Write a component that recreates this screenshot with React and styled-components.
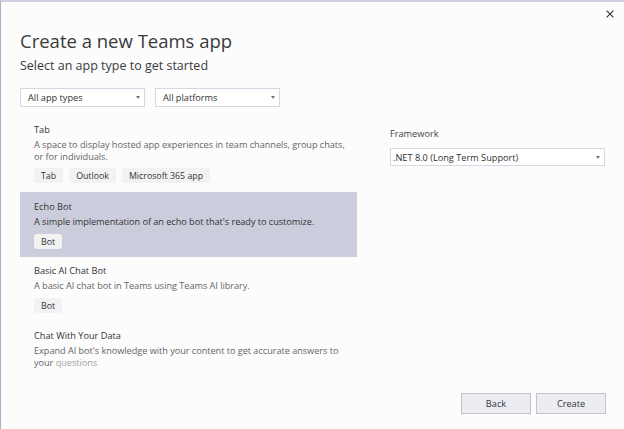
import React from "react";
import styled, { createGlobalStyle } from "styled-components";

const Global = createGlobalStyle`
  html, body { margin: 0; padding: 0; background: #fcfcfd; }
  * { box-sizing: border-box; }
`;

const Dialog = styled.div`
  width: 624px; height: 429px; overflow: hidden; background: #fcfcfd;
  border-top: 2px solid #cfcfe0; border-left: 1px solid #a9aecf;
  font-family: "Open Sans", "Noto Sans", sans-serif; color: #333;
  display: flex; flex-direction: column;
`;
const CloseRow = styled.div`
  height: 17px; padding: 8px 10px 0 0; display: flex; justify-content: flex-end;
`;
const CloseBtn = styled.svg`width: 8px; height: 8px; display: block;`;
const Body = styled.div`
  flex: 1; min-height: 0; display: grid; grid-template-columns: 337px 1fr; column-gap: 33px;
  padding: 0 18px 0 19px;
`;
const Left = styled.div`display: flex; flex-direction: column; min-height: 0;`;
const Title = styled.h1`
  margin: 10px 0 0; font-size: 18.5px; line-height: 24px; font-weight: 400; color: #3a3a3a;
`;
const Subtitle = styled.h2`
  margin: 4px 0 0; font-size: 12.5px; line-height: 18px; font-weight: 400; color: #3a3a3a;
`;
const Filters = styled.div`display: flex; gap: 10px; margin-top: 13px;`;
const Select = styled.div`
  width: ${p => p.$w}px; height: ${p => p.$h}px; background: #fff; border: 1px solid #d6d6e4;
  display: flex; align-items: center; justify-content: space-between;
  padding: 0 ${p => p.$pr}px 0 ${p => p.$pl}px;
  font-size: 9.2px; color: #333;
`;
const Caret = styled.span`
  width: 0; height: 0; border-left: 2.5px solid transparent; border-right: 2.5px solid transparent;
  border-top: 3px solid #777;
`;
const List = styled.div`margin-top: 14px; display: flex; flex-direction: column;`;
const Item = styled.div`
  height: ${p => p.$h}px; padding: ${p => p.$pt}px 10px 0 14px;
  background: ${p => (p.$active ? "#cbcddc" : "transparent")};
`;
const ItemName = styled.div`font-size: 9.2px; line-height: 14px; color: #333;`;
const ItemDesc = styled.div`
  margin-top: 2px; font-size: 9.2px; line-height: 12px; letter-spacing: -0.05px;
  color: ${p => (p.$active ? "#333" : "#666")};
`;
const Fade = styled.span`color: #a0a0a0;`;
const Tags = styled.div`display: flex; gap: 6px; margin-top: ${p => p.$mt}px;`;
const Tag = styled.span`
  height: 15px; padding: 0 7px; border-radius: 3px; background: #f2f2f3;
  display: inline-flex; align-items: center; font-size: 8.8px; color: #333;
`;
const Right = styled.div`padding-top: 108px;`;
const Label = styled.div`font-size: 9.2px; line-height: 14px; color: #444; margin-bottom: 7px;`;
const Footer = styled.div`
  height: 36px; flex-shrink: 0; display: flex; justify-content: flex-end; gap: 5px; padding: 0 18px 15px 0;
`;
const Button = styled.button`
  width: 70px; height: 21px; background: #ecedf2; border: 1px solid #c4c4c8; border-radius: 0;
  font-family: inherit; font-size: 9.2px; color: #333; padding: 0;
`;

export default function App() {
  return (
    <>
      <Global />
      <Dialog>
        <CloseRow>
          <CloseBtn viewBox="0 0 8 8"><path d="M.6.6l6.8 6.8M7.4.6L.6 7.4" stroke="#333" strokeWidth="1.1" fill="none" /></CloseBtn>
        </CloseRow>
        <Body>
          <Left>
            <Title>Create a new Teams app</Title>
            <Subtitle>Select an app type to get started</Subtitle>
            <Filters>
              <Select $w={125} $h={19} $pl={7} $pr={4}>All app types<Caret /></Select>
              <Select $w={125} $h={19} $pl={7} $pr={4}>All platforms<Caret /></Select>
            </Filters>
            <List>
              <Item $h={71} $pt={2}>
                <ItemName>Tab</ItemName>
                <ItemDesc>A space to display hosted app experiences in team channels, group chats, or for individuals.</ItemDesc>
                <Tags $mt={5}><Tag>Tab</Tag><Tag>Outlook</Tag><Tag>Microsoft 365 app</Tag></Tags>
              </Item>
              <Item $h={65} $active $pt={8}>
                <ItemName>Echo Bot</ItemName>
                <ItemDesc $active>A simple implementation of an echo bot that's ready to customize.</ItemDesc>
                <Tags $mt={6}><Tag>Bot</Tag></Tags>
              </Item>
              <Item $h={65} $pt={7}>
                <ItemName>Basic AI Chat Bot</ItemName>
                <ItemDesc>A basic AI chat bot in Teams using Teams AI library.</ItemDesc>
                <Tags $mt={6}><Tag>Bot</Tag></Tags>
              </Item>
              <Item $h={50} $pt={7}>
                <ItemName>Chat With Your Data</ItemName>
                <ItemDesc>Expand AI bot's knowledge with your content to get accurate answers to your <Fade>questions</Fade></ItemDesc>
              </Item>
            </List>
          </Left>
          <Right>
            <Label>Framework</Label>
            <Select $w={215} $h={18} $pl={2} $pr={4}>.NET 8.0 (Long Term Support)<Caret /></Select>
          </Right>
        </Body>
        <Footer>
          <Button>Back</Button>
          <Button>Create</Button>
        </Footer>
      </Dialog>
    </>
  );
}
